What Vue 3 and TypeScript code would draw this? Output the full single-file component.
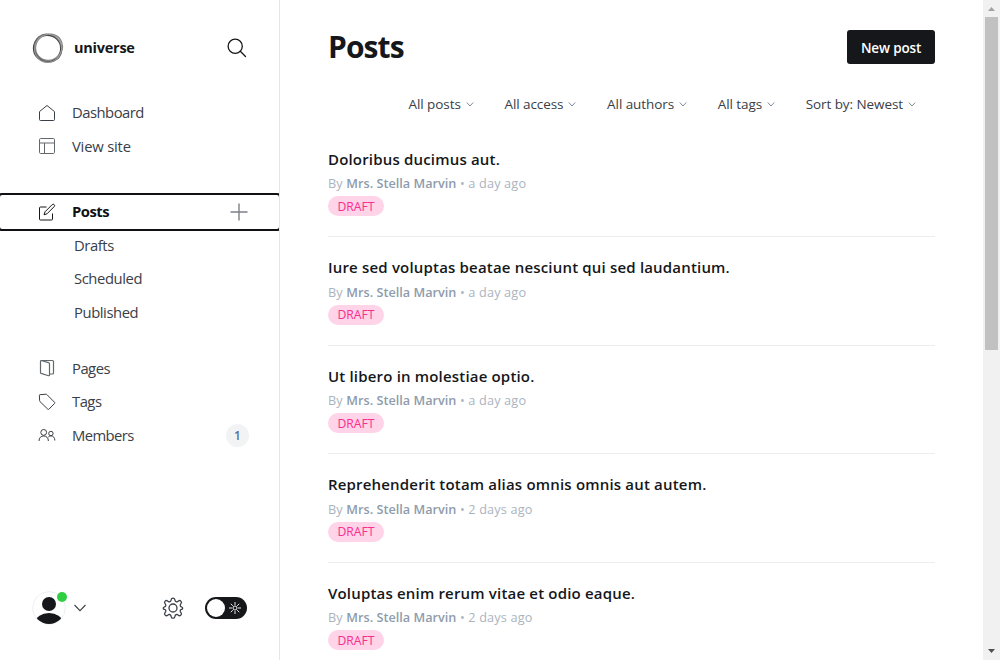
<script setup lang="ts">
interface Post { title: string; when: string }

const posts: Post[] = [
  { title: 'Doloribus ducimus aut.', when: 'a day ago' },
  { title: 'Iure sed voluptas beatae nesciunt qui sed laudantium.', when: 'a day ago' },
  { title: 'Ut libero in molestiae optio.', when: 'a day ago' },
  { title: 'Reprehenderit totam alias omnis omnis aut autem.', when: '2 days ago' },
  { title: 'Voluptas enim rerum vitae et odio eaque.', when: '2 days ago' },
]
const filters: string[] = ['All posts', 'All access', 'All authors', 'All tags', 'Sort by: Newest']
const subItems: string[] = ['Drafts', 'Scheduled', 'Published']
</script>

<template>
  <div class="app">
    <aside class="sidebar">
      <header class="brand">
        <svg class="logo" viewBox="0 0 32 32" width="32" height="32" fill="none">
          <ellipse cx="15.2" cy="16.4" rx="13.6" ry="13.2" stroke="#444" stroke-width="1.5" />
          <ellipse cx="16.800" cy="15.200" rx="13.800" ry="12.8" stroke="#888" stroke-width="1.4" transform="rotate(-35 17 15)" />
          <ellipse cx="16" cy="16" rx="14.5" ry="13" stroke="#666" stroke-width="1.2" transform="rotate(50 16 16)" />
          <ellipse cx="16.4" cy="15.8" rx="14.2" ry="13.4" stroke="#999" stroke-width="1" transform="rotate(110 16 16)" />
        </svg>
        <span class="site">universe</span>
        <svg class="search" viewBox="0 0 20 20" width="20" height="20" fill="none" stroke="#15171a" stroke-width="1.3" stroke-linecap="round">
          <circle cx="8.2" cy="8.2" r="7.1" /><path d="M13.3 13.3 18.5 18.5" />
        </svg>
      </header>

      <nav class="menu">
        <a class="row">
          <svg class="icon" viewBox="0 0 18 18"><path d="M1.5 7.6 9 1.5l7.5 6.1v7.9a1 1 0 0 1-1 1h-13a1 1 0 0 1-1-1z" /></svg>
          <span class="lbl">Dashboard</span>
        </a>
        <a class="row">
          <svg class="icon gray" viewBox="0 0 18 18"><rect x="1.5" y="1.5" width="15" height="15" rx="1.2" /><path d="M1.5 6h15M6.500 6v10.500" /></svg>
          <span class="lbl wide">View site</span>
        </a>
      </nav>

      <nav class="menu posts-menu">
        <a class="row active">
          <svg class="icon" viewBox="0 0 18 18"><path d="M8.5 4H2.5a1 1 0 0 0-1 1v11a1 1 0 0 0 1 1h11a1 1 0 0 0 1-1v-5.5" /><path d="M7 8.8 14.2 1.6a1.35 1.35 0 0 1 1.9 0l.1.1a1.35 1.35 0 0 1 0 1.9L9 10.8l-3 1z" /></svg>
          <span class="lbl">Posts</span>
          <svg class="plus" viewBox="0 0 18 18" width="18" height="18"><path d="M9 .5v17M.5 9h17" stroke="#7c8187" stroke-width="1.4" /></svg>
        </a>
        <a v-for="s in subItems" :key="s" class="row sub"><span class="lbl">{{ s }}</span></a>
      </nav>

      <nav class="menu last-menu">
        <a class="row">
          <svg class="icon gray" viewBox="0 0 18 18"><path stroke-width="1.200" d="M3 1.500h11.500a1 1 0 0 1 1 1v11.500a1 1 0 0 1-1 1h-2.500M3 1.500a.8.8 0 0 0-.5.700v11.300a1 1 0 0 0 .6.900l7.400 2.300a.8.8 0 0 0 1-.8V4.900a1.200 1.200 0 0 0-.9-1.200L3 1.500" /></svg>
          <span class="lbl">Pages</span>
        </a>
        <a class="row">
          <svg class="icon" viewBox="0 0 18 18"><path d="M2 1.7 8 1.2a1 1 0 0 1 .8.3l7.8 7.8a.8.8 0 0 1 0 1.1l-5.7 5.8a.8.8 0 0 1-1.1 0L1.900 8.500a1 1 0 0 1-.3-.8L1.400 2.400a.6.600 0 0 1 .6-.7z" /></svg>
          <span class="lbl">Tags</span>
        </a>
        <a class="row">
          <svg class="icon" viewBox="0 0 18 18"><circle cx="5.7" cy="6.4" r="2.9" /><circle cx="12.9" cy="7.5" r="2.2" /><path d="M1 15c0-3.2 1.9-5 4.7-5s4.6 1.800 4.700 5M10.300 11c.7-.7 1.600-1.100 2.700-1.100 2.300 0 3.800 1.700 3.900 4.600" /></svg>
          <span class="lbl members">Members</span>
          <span class="count">1</span>
        </a>
      </nav>

      <footer class="foot">
        <div class="avatar">
          <svg viewBox="0 0 34 34" width="34" height="34">
            <defs><clipPath id="avatar-clip"><circle cx="17" cy="17" r="16" /></clipPath></defs>
            <circle cx="17" cy="17" r="16.300" fill="#fff" stroke="#e8eaec" stroke-width=".8" />
            <g clip-path="url(#avatar-clip)" fill="#15171a"><circle cx="17" cy="13" r="7" /><ellipse cx="17" cy="31" rx="13.500" ry="9" /></g>
          </svg>
          <i class="online"></i>
        </div>
        <svg class="drop" viewBox="0 0 12 8" width="12" height="8" fill="none" stroke="#394047" stroke-width="1.1"><path d="M.5 1 6 6.700 11.500 1" /></svg>
        <svg class="gear" viewBox="0 0 22 22" width="22" height="22" fill="none" stroke="#394047" stroke-width="1.300" stroke-linejoin="round">
          <path d="M9.200 2.500a1.850 1.850 0 0 1 3.600 0l.3 1.100a1.700 1.700 0 0 0 2.400 1l.9-.6a1.850 1.850 0 0 1 2.600 2.600l-.6.9a1.700 1.700 0 0 0 1 2.400l.4.1a1.200 1.200 0 0 1 0 2.300l-.4.1a1.700 1.700 0 0 0-1 2.400l.6.900a1.850 1.850 0 0 1-2.600 2.600l-.9-.6a1.700 1.700 0 0 0-2.400 1l-.3 1.100a1.850 1.850 0 0 1-3.600 0l-.3-1.100a1.700 1.700 0 0 0-2.400-1l-.9.600a1.850 1.850 0 0 1-2.600-2.600l.6-.9a1.700 1.700 0 0 0-1-2.400l-.5-.1a1.200 1.200 0 0 1 0-2.300l.5-.1a1.700 1.700 0 0 0 1-2.400l-.6-.9a1.850 1.850 0 0 1 2.600-2.600l.9.600a1.700 1.700 0 0 0 2.400-1z" />
          <circle cx="11" cy="11" r="4" />
        </svg>
        <div class="toggle">
          <i class="knob"></i>
          <svg viewBox="0 0 14 14" width="14" height="14" fill="none" stroke="#fff" stroke-width=".9"><circle cx="7" cy="7" r="2" /><path d="M7 1v3M7 10v3M1 7h3M10 7h3M2.800 2.800l2 2M9.200 9.200l2 2M11.200 2.800l-2 2M4.800 9.200l-2 2" /></svg>
        </div>
      </footer>
    </aside>

    <main class="main">
      <header class="head">
        <h1>Posts</h1>
        <button class="new">New post</button>
      </header>
      <div class="filters">
        <span v-for="f in filters" :key="f" class="filter">
          <span>{{ f }}</span>
          <svg viewBox="0 0 8 6" width="8" height="6" fill="none" stroke="#7c8b9a" stroke-width="1"><path d="M.8 1.500 4 5 7.200 1.500" /></svg>
        </span>
      </div>
      <section class="list">
        <article v-for="(p, i) in posts" :key="i" class="post">
          <h3>{{ p.title }}</h3>
          <p>By <b>Mrs. Stella Marvin</b> • {{ p.when }}</p>
          <span class="badge">DRAFT</span>
        </article>
      </section>
    </main>

    <div class="scroll">
      <svg viewBox="0 0 17 17" width="17" height="17" fill="#a3a3a3"><path d="M5 11h7L8.500 7z" /></svg>
      <i class="thumb"></i>
      <svg viewBox="0 0 17 17" width="17" height="17" fill="#505050"><path d="M5 6h7L8.500 10z" /></svg>
    </div>
  </div>
</template>

<style>
html, body { overflow: hidden; background: #fff; }
</style>

<style scoped>
* { box-sizing: border-box; }
.app { display: flex; width: 1000px; height: 660px; overflow: hidden; background: #fff; color: #15171a; font-family: "Open Sans", "Noto Sans", sans-serif; white-space: nowrap; }
svg { display: block; flex: none; }
.sidebar { width: 280px; flex: none; display: flex; flex-direction: column; border-right: 1px solid #e4e6e8; overflow: hidden; }
.brand { display: flex; align-items: center; height: 32px; margin-top: 32px; padding: 0 32px; }
.site { margin-left: 10px; padding-bottom: 2px; font-size: 14.500px; font-weight: 700; letter-spacing: -.25px; }
.search { margin-left: auto; }
.menu { margin-top: 31.900px; }
.posts-menu { margin-top: 32.100px; }
.last-menu { margin-top: 22.500px; }
.row { display: flex; align-items: center; height: 33.500px; padding: 0 31px 0 38px; font-size: 14.800px; color: #394047; }
.row .lbl { margin-left: 16px; padding-bottom: 1px; font-weight: 400; letter-spacing: -.5px; }
.row .lbl.wide { letter-spacing: -.2px; }
.row .lbl.members { letter-spacing: -.6px; }
.row.sub .lbl { margin-left: 36px; padding-bottom: .8px; letter-spacing: -.42px; }
.icon { width: 18px; height: 18px; fill: none; stroke: #394047; stroke-width: 1; stroke-linejoin: round; }
.icon.gray { stroke: #62676c; }
.row.active { height: 34px; margin-bottom: -.5px; outline: 2px solid #101114; border-radius: 2px; color: #101114; }
.row.active .lbl { font-weight: 700; letter-spacing: -.5px; padding-bottom: 2px; }
.row.active .icon { stroke: #15171a; }
.plus { margin-left: auto; }
.count { margin-left: auto; margin-right: -1px; width: 23px; height: 23px; border-radius: 50%; background: #f1f3f4; color: #5a7099; font-size: 12px; font-weight: 600; line-height: 24px; text-align: center; }
.foot { display: flex; align-items: center; margin-top: auto; margin-bottom: 35px; height: 34px; padding: 0 32px; }
.avatar { position: relative; }
.online { position: absolute; right: -1px; top: 1px; width: 10px; height: 10px; border-radius: 50%; background: #30cf43; }
.drop { margin-left: 8px; }
.gear { margin-left: 76px; }
.toggle { display: flex; align-items: center; justify-content: space-between; width: 42px; height: 22px; margin-left: 21px; padding: 0 5px 0 2px; border-radius: 11px; background: #15171a; }
.knob { width: 18px; height: 18px; border-radius: 50%; background: #fff; }
.main { width: 607px; margin-left: 48px; flex: none; }
.head { display: flex; align-items: center; justify-content: space-between; height: 34px; margin-top: 30px; }
h1 { margin: 0; font-size: 30px; line-height: 34px; font-weight: 700; letter-spacing: -.9px; }
.new { width: 88px; height: 34px; padding: 2px 0 0; border: 0; border-radius: 3px; background: #15171a; color: #fff; font: 600 13.500px/32px "Open Sans", "Noto Sans", sans-serif; letter-spacing: -.15px; }
.filters { display: flex; justify-content: flex-end; align-items: center; gap: 30.700px; height: 20px; margin-top: 30px; padding-right: 19px; }
.filter { display: flex; align-items: center; gap: 5px; font-size: 13.500px; color: #394047; letter-spacing: -.08px; }
.list { margin-top: 14.500px; }
.post { height: 108.500px; padding-top: 19.200px; border-bottom: 1px solid #ebeef0; }
h3 { margin: 0; font-size: 15px; line-height: 22px; font-weight: 600; letter-spacing: .18px; }
p { margin: 4.400px 0 0; height: 18px; font-size: 12.700px; line-height: 18px; letter-spacing: .17px; color: #abb4be; }
p b { font-weight: 600; letter-spacing: 0; color: #8e9cac; }
.badge { display: flex; align-items: center; justify-content: center; width: 56px; height: 20px; margin-top: 4.400px; border-radius: 10px; background: #ffd3e8; color: #fb2d8d; font-size: 12.200px; }
.scroll { display: flex; flex-direction: column; width: 17px; height: 660px; margin-left: auto; background: #f1f1f1; }
.thumb { width: 13px; height: 333px; margin: 0 2px auto; background: #c1c1c1; }
</style>
